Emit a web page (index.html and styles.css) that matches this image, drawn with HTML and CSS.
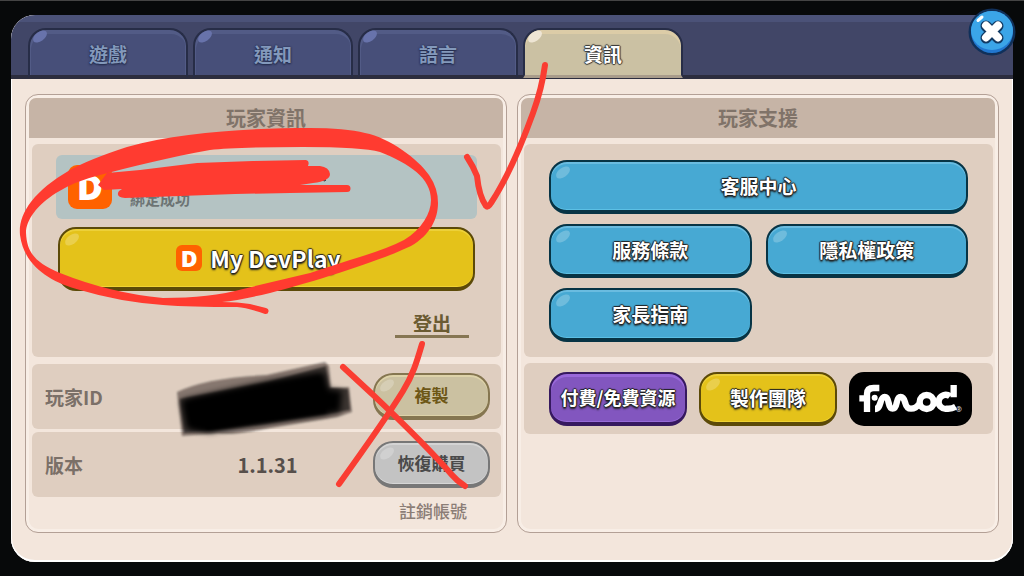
FILE: index.html
```html
<!DOCTYPE html>
<html lang="zh-Hant">
<head>
<meta charset="utf-8">
<meta name="viewport" content="width=device-width, initial-scale=1">
<title>設定</title>
<link rel="stylesheet" href="styles.css">
</head>
<body>
<main class="dialog">
  <header class="topbar">
    <nav class="tabs">
      <button class="tab" type="button">遊戲</button>
      <button class="tab" type="button">通知</button>
      <button class="tab" type="button">語言</button>
      <button class="tab tab-active" type="button">資訊</button>
    </nav>
    <button class="close" type="button" aria-label="關閉">
      <svg viewBox="0 0 48 48" aria-hidden="true">
        <circle cx="24" cy="24" r="23.500" fill="#10305a"/>
        <circle cx="24" cy="24" r="21" fill="#2277cf"/>
        <ellipse cx="24" cy="22.500" rx="21" ry="19.500" fill="#3ba5e8"/>
        <path d="M10 12.500 14 9" stroke="#fff" stroke-width="3" stroke-linecap="round"/>
        <path d="M18 18 30 30M30 18 18 30" stroke="#123a63" stroke-width="11" stroke-linecap="round"/>
        <path d="M18 17.500 30 29.500M30 17.500 18 29.500" stroke="#fff" stroke-width="8" stroke-linecap="round"/>
      </svg>
    </button>
  </header>

  <div class="panels">
    <section class="panel">
      <h2 class="panel-title">玩家資訊</h2>
      <div class="blocks">
        <div class="block account">
          <div class="linked">
            <span class="devplay devplay-large">D</span>
            <span class="linked-status">綁定成功</span>
          </div>
          <button class="btn btn-yellow btn-devplay" type="button"><span class="devplay">D</span>My DevPlay</button>
          <a class="logout" href="#">登出</a>
        </div>
        <div class="block row">
          <span class="row-label">玩家ID</span>
          <span class="row-value"></span>
          <button class="btn btn-small btn-khaki" type="button">複製</button>
        </div>
        <div class="block row">
          <span class="row-label">版本</span>
          <span class="row-value">1.1.31</span>
          <button class="btn btn-small btn-grey" type="button">恢復購買</button>
        </div>
      </div>
      <a class="delete-account" href="#">註銷帳號</a>
    </section>

    <section class="panel">
      <h2 class="panel-title">玩家支援</h2>
      <div class="blocks blocks-support">
        <div class="block support">
          <button class="btn btn-blue btn-wide" type="button">客服中心</button>
          <button class="btn btn-blue" type="button">服務條款</button>
          <button class="btn btn-blue" type="button">隱私權政策</button>
          <button class="btn btn-blue" type="button">家長指南</button>
        </div>
        <div class="block credits">
          <button class="btn btn-purple" type="button">付費/免費資源</button>
          <button class="btn btn-yellow" type="button">製作團隊</button>
          <svg class="fmod" viewBox="0 0 369 162" role="img" aria-label="fmod">
            <g fill="none" stroke="#fff" stroke-width="19">
              <path d="M54 120V66Q54 48 74 48H91M31 79H60"/>
              <path d="M78 111C98 111 91 75 107 75C124 75 114 110 131 110C148 110 138 75 155 75C174 75 162 110 186 110C198 110 205 104 210 96"/>
              <circle cx="233" cy="90" r="21"/>
              <path d="M314 39V76M303 73A21 21 0 1 0 294 110Q308 111 320 104"/>
            </g>
            <circle cx="77" cy="77" r="9" fill="#fff"/>
            <text class="fmod-mark" x="320" y="119">®</text>
          </svg>
        </div>
      </div>
    </section>
  </div>
</main>

<svg class="markup" viewBox="0 0 1024 576" preserveAspectRatio="none" aria-hidden="true">
  <defs>
    <filter id="soft" x="-10%" y="-20%" width="120%" height="140%"><feGaussianBlur stdDeviation="1.200"/></filter>
    <filter id="softer" x="-10%" y="-20%" width="120%" height="140%"><feGaussianBlur stdDeviation="3"/></filter>
  </defs>
  <g>
    <path d="M177 392Q205 378 267 375L325 362 329 366 331 388 349 387 352 412 337 417 270 428Q230 436 218 433L182 436Z" fill="#080606" opacity=".42" filter="url(#soft)"/>
    <path d="M180 399 268 382 326 366 329 388 348 389 350 410 332 413 265 424 184 433Z" fill="#000" opacity=".55" filter="url(#soft)"/>
    <path d="M181 400 270 381 324 372 328 389 342 391 340 412 265 422 210 432 187 429Z" fill="#000" filter="url(#softer)"/>
    <path d="M188 402 270 385 320 376 328 413 265 422 207 430 192 426Z" fill="#000" filter="url(#softer)"/>
    <path d="M190 405 270 387 318 379 326 412 265 421 207 429Z" fill="#000" filter="url(#soft)"/>
  </g>
  <path d="M317 173 325 181M325 181V176" stroke="#444c50" stroke-width="2"/>
  <g fill="#ff3b30">
    <path fill-rule="evenodd" d="M20 235C18 215 32 192 70 170Q90 159 127 147C180 132 250 128 310 128Q345 128 365 133C390 138 418 159 429 175Q438 188 438 203C438 219 430 235 411 246C380 261 310 283 270 293Q240 300 222 302Q238 302 250 304L266 308A3 3 0 0 1 265 314Q248 308 237 307Q190 307 163 305Q120 302 80 290C50 282 24 266 20 235ZM26 233C27 252 34 262 60 273Q110 293 163 298Q210 298 243 289L310 273 350 260Q387 249 404 240C422 229 431 213 431 200C431 178 410 164 380 152Q362 147 303 147Q235 147 210 150C170 157 130 167 100 175Q75 181 56 193C37 205 26 220 26 233Z"/>
    <path d="M98 185 107 173 140 170 197 163 253 161 306 160Q310 161 308 166L320 166Q329 167 330 174Q330 181 313 183L300 185 347 185A3 3 0 0 1 347 192L290 193 235 194 125 198Q115 197 119 191L122 189 104 190Z"/>
  </g>
  <g class="pen">
    <path d="M467 157Q473 166 477 176Q479 196 486 206Q488 208 491 203Q512 171 533 113Q542 88 545 65"/>
    <path d="M422 344C417 361 413 375 403 391C390 412 370 441 339 484"/>
    <path d="M343 367 370 392C390 411 425 444 452 475Q457 481 465 486"/>
  </g>
</svg>
</body>
</html>
```
FILE: styles.css
```css
* {
  box-sizing: border-box;
}

body {
  margin: 0;
  position: relative;
  min-height: 100vh;
  padding: 14px 11px;
  display: flex;
  flex-direction: column;
  border-top: 1px solid #444;
  background: #07090a;
  font-family: "Noto Sans CJK TC", "Noto Sans", sans-serif;
  font-weight: 700;
}

button {
  font: inherit;
  cursor: pointer;
}

.dialog {
  flex: 1;
  display: flex;
  flex-direction: column;
  border-radius: 24px;
  background: #f3e6dc;
  box-shadow: inset 0 -2px #fff, inset 1px 0 #fff, inset -1px 0 #fff;
}

.topbar {
  position: relative;
  padding: 13px 18px 0 17px;
  border-radius: 24px 24px 0 0;
  background: linear-gradient(#4b5278 0 7px, #414667 7px);
  box-shadow: inset 0 -4px #2c2d3e;
}

.tabs {
  display: grid;
  grid-template-columns: repeat(4, 160px);
  gap: 5px;
}

.tab {
  position: relative;
  height: 50px;
  margin-bottom: 1px;
  padding: 2px 0 0;
  border: 2px solid #272d47;
  border-bottom: 3px solid #2c2d3e;
  border-radius: 18px 18px 0 0;
  background: #474f79;
  box-shadow: inset 1px 4px #525b86, inset -1px 0 #525b86;
  color: #8399bb;
  font-size: 19px;
  text-shadow: 0 1px 2px #20294a, 0 0 2px #20294a;
}

.tab::before,
.btn::before {
  content: "";
  position: absolute;
  top: 2px;
  left: 2px;
  width: 16px;
  height: 9px;
  border-radius: 50%;
  background: #6873ab;
  transform: rotate(-36deg);
}

.tab-active {
  border-bottom: 3px solid #a99c8b;
  background: #cbc1a3;
  box-shadow: inset 0 4px #dccca7;
  color: #fff;
  text-shadow: 0 1px 1px #333, 1px 0 1px #333, -1px 0 1px #333, 0 -1px 1px #333;
}

.tab-active::before {
  background: #eee5d4;
}

.close {
  position: absolute;
  top: -7px;
  right: -3px;
  width: 48px;
  height: 48px;
  padding: 0;
  border: 0;
  background: none;
}

.close svg {
  display: block;
}

.panels {
  flex: 1;
  display: grid;
  grid-template-columns: 1fr 1fr;
  gap: 10px;
  padding: 15px 14px 29px;
}

.panel {
  display: flex;
  flex-direction: column;
  padding: 3px;
  border: 1px solid #b3a096;
  border-radius: 13px;
  box-shadow: inset 0 0 0 3px #f8eee6;
}

.panel-title {
  margin: 0;
  border-radius: 7px 7px 0 0;
  background: #c6b4a6;
  color: #807369;
  font-size: 20px;
  font-weight: 700;
  line-height: 40px;
  text-align: center;
}

.blocks {
  display: flex;
  flex-direction: column;
  gap: 3px;
  padding: 6px 2px 0 3px;
}

.block {
  border-radius: 6px;
  background: #dfcec0;
}

.account {
  display: flex;
  flex-direction: column;
  height: 213px;
  margin-bottom: 4px;
  padding: 11px 24px 0;
}

.linked {
  display: flex;
  align-items: flex-end;
  gap: 18px;
  height: 64px;
  padding: 0 12px 10px;
  border-radius: 6px;
  background: #b4c3c3;
}

.linked-status {
  color: #6c7474;
  font-size: 15px;
  line-height: 20px;
}

.devplay {
  width: 26px;
  height: 26px;
  border-radius: 6px;
  background: #ff6200;
  color: #fff;
  font-family: "Open Sans", "Noto Sans", sans-serif;
  font-size: 23px;
  font-weight: 800;
  line-height: 26px;
  text-align: center;
  text-shadow: none;
}

.devplay-large {
  width: 44px;
  height: 44px;
  border-radius: 9px;
  font-size: 36px;
  line-height: 44px;
}

.btn {
  position: relative;
  height: 54px;
  padding: 0 0 2px;
  border: 2px solid #073445;
  border-bottom-width: 4px;
  border-radius: 18px;
  color: #fff;
  font-size: 19px;
  text-shadow: 0 1px 1px #222, 1px 0 1px #222, -1px 0 1px #222, 0 -1px 1px #222, 0 2px 2px #222;
  white-space: nowrap;
}

.btn::before {
  top: 6px;
  left: 4px;
  background: #fff;
  opacity: .22;
}

.btn-blue {
  background: #47a9d3;
  box-shadow: inset 0 2px #6abce0, inset 0 -1px #5cc0e5;
}

.btn-yellow {
  border-color: #5c4a08;
  background: #e4c21a;
  box-shadow: inset 0 2px #ecd03a, inset 0 -1px #f0d333;
}

.btn-purple {
  border-color: #36195f;
  background: #8256bf;
  box-shadow: inset 0 3px #9968da, inset 0 -1px #976bd8;
  font-size: 18px;
}

.btn-purple::before {
  display: none;
}

.btn-khaki {
  border-color: #857650;
  background: #cbc1a1;
  box-shadow: inset 0 2px #ded3a9, inset 0 -1px #ddd2a8;
  color: #6d5716;
}

.btn-grey {
  border-color: #777;
  background: #c3c3c3;
  box-shadow: inset 0 2px #d4d4d4, inset 0 -1px #d6d6d6;
  color: #4a4a4a;
}

.btn-small {
  width: 117px;
  height: 47px;
  border-radius: 20px;
  font-size: 17px;
  text-shadow: none;
}

.btn-devplay {
  display: flex;
  align-items: center;
  justify-content: center;
  gap: 8px;
  height: 64px;
  margin: 8px 2px 0;
  padding: 0 16px 0 0;
  font-size: 23px;
}

.logout {
  align-self: flex-end;
  width: 74px;
  margin: 20px 8px 0 0;
  border-bottom: 3px solid #867653;
  color: #6b5b32;
  font-size: 19px;
  line-height: 24px;
  text-align: center;
  text-decoration: none;
}

.row {
  display: grid;
  grid-template-columns: 1fr auto 1fr;
  align-items: center;
  height: 65px;
  padding: 0 11px 0 13px;
}

.row .btn {
  justify-self: end;
}

.row-label {
  color: #7b7068;
  font-size: 19px;
}

.row-value {
  color: #574f4b;
  font-size: 20px;
}

.delete-account {
  align-self: flex-end;
  margin: 2px 36px 0 0;
  color: #8b7d76;
  font-size: 17px;
  font-weight: 500;
  line-height: 24px;
  text-decoration: none;
}

.blocks-support {
  gap: 6px;
}

.support {
  display: grid;
  grid-template-columns: 1fr 1fr;
  align-content: start;
  gap: 10px 14px;
  height: 213px;
  padding: 16px 25px 0;
}

.btn-wide {
  grid-column: 1 / -1;
}

.credits {
  display: grid;
  grid-template-columns: 138fr 138fr 123fr;
  gap: 12px;
  height: 71px;
  padding: 9px 21px 0 25px;
}

.fmod {
  width: 100%;
  height: 54px;
  border-radius: 15px;
  background: #000;
}

.fmod-mark {
  fill: #ddd;
  font-family: "Noto Sans", sans-serif;
  font-size: 22px;
}

.markup {
  position: absolute;
  top: -1px;
  left: 0;
  width: 100%;
  height: 100vh;
  pointer-events: none;
}

.pen {
  fill: none;
  stroke: #fa3d32;
  stroke-width: 6px;
  stroke-linecap: round;
  stroke-linejoin: round;
}
```
